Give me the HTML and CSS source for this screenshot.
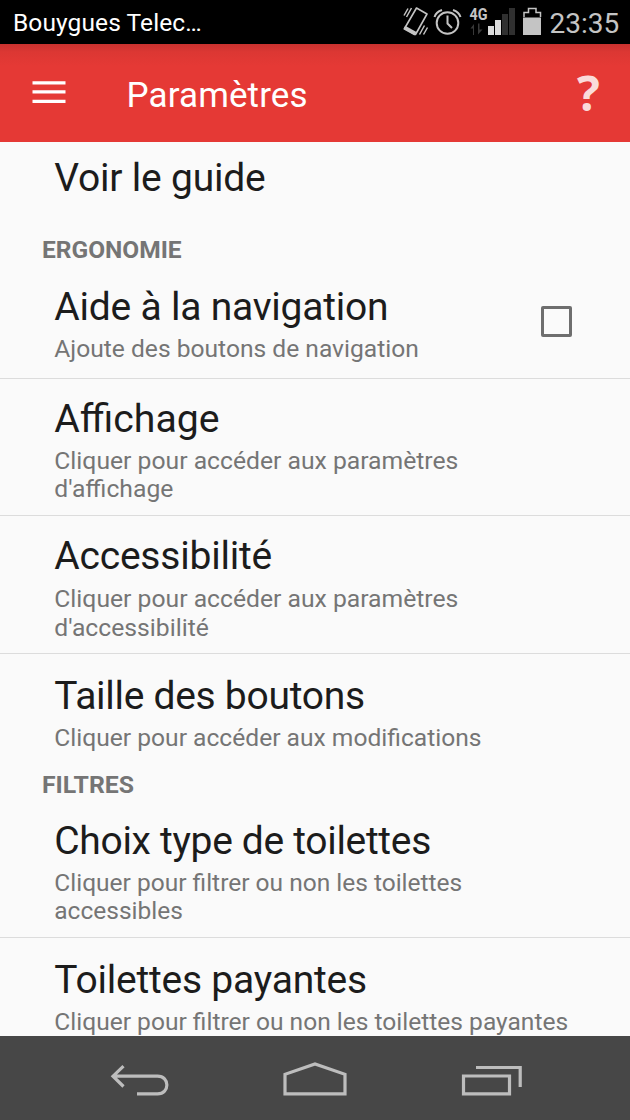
FILE: index.html
```html
<!DOCTYPE html>
<html lang="fr">
<head>
<meta charset="utf-8">
<title>Paramètres</title>
<link rel="stylesheet" href="styles.css">
</head>
<body>
<div class="screen">
  <div class="status">
    <span class="carrier">Bouygues Telec…</span>
    <svg class="status-icons" width="152" height="44" viewBox="0 0 152 44">
      <g fill="none" stroke="#c4c4c4" stroke-width="1.6">
        <path d="M16.500 8 L27 14 L15.500 34.500 L4.500 28.500 Z" stroke-linejoin="round"/>
        <path d="M4.300 27.500 L15.500 33.700" stroke-width="4"/>
        <path d="M4 15.500 L8 8.500 M6.500 17 L11.500 8 M19.500 34.500 L24.500 25.500 M23.500 34.500 L27.500 27.500" stroke-width="1.500"/>
        <circle cx="47.500" cy="23" r="10.800" stroke-width="2"/>
        <path d="M47.500 15.500 V23.500 L52 28" stroke-width="2"/>
        <path d="M34.500 17 Q36 12 42 10 M53 10 Q59 12 60.500 17" stroke-width="2"/>
      </g>
      <text class="net" x="69.500" y="20" textLength="18" lengthAdjust="spacingAndGlyphs">4G</text>
      <path d="M74 35 V24 L70.500 28.500 H73 V35 Z M78 23.500 V34.500 L82.500 29.500 H79.500 V23.500 Z" fill="#393939"/>
      <path d="M88 26 h6 v9 h-6 z M95 20 h6 v15 h-6 z" fill="#dcdcdc"/>
      <path d="M102 14 h6 v21 h-6 z M109 8 h6 v27 h-6 z" fill="#303030"/>
      <path d="M124 17 V12.500 H128.500 V8.500 H136 V12.500 H140.500 V17" fill="none" stroke="#c4c4c4" stroke-width="1.500"/>
      <path d="M123 17.500 h18 v17.500 h-18 z" fill="#c4c4c4"/>
    </svg>
    <span class="clock">23:35</span>
  </div>
  <div class="appbar">
    <svg class="menu" width="34" height="24" viewBox="0 0 34 24"><path d="M.5 1.200h33v3.200H.5zM.5 10.300h33v3.200H.5zM.5 19.800h33v3.200H.5z" fill="#fff"/></svg>
    <h1 class="heading">Paramètres</h1>
    <span class="help">?</span>
  </div>
  <div class="list">
    <div class="row row-guide"><div class="title">Voir le guide</div></div>
    <div class="section">ERGONOMIE</div>
    <div class="row row-nav line">
      <div><div class="title">Aide à la navigation</div><div class="summary">Ajoute des boutons de navigation</div></div>
      <span class="box"></span>
    </div>
    <div class="row row-display line"><div><div class="title">Affichage</div><div class="summary">Cliquer pour accéder aux paramètres<br>d'affichage</div></div></div>
    <div class="row row-access line"><div><div class="title">Accessibilité</div><div class="summary">Cliquer pour accéder aux paramètres<br>d'accessibilité</div></div></div>
    <div class="row row-size"><div><div class="title">Taille des boutons</div><div class="summary">Cliquer pour accéder aux modifications</div></div></div>
    <div class="section section-filter">FILTRES</div>
    <div class="row row-type line"><div><div class="title">Choix type de toilettes</div><div class="summary">Cliquer pour filtrer ou non les toilettes<br>accessibles</div></div></div>
    <div class="row row-paid"><div><div class="title">Toilettes payantes</div><div class="summary">Cliquer pour filtrer ou non les toilettes payantes</div></div></div>
  </div>
  <div class="navbar">
    <svg width="630" height="84" viewBox="0 0 630 84" fill="none" stroke="#bdbdbd" stroke-width="3.200">
      <path d="M123.500 30.200 L113 40.200 L123.500 50.500 M113 40.200 H157.500 C170 40.200 170 57.800 157.500 57.800 H137"/>
      <path d="M285 57.800 V38.300 L315 28 L345 38.300 V57.800 Z"/>
      <path d="M463.500 40 H509.500 V57.800 H463.500 Z M476 31.500 H520.200 V51"/>
    </svg>
  </div>
</div>
</body>
</html>
```
FILE: styles.css
```css
* { box-sizing: border-box; }
body { margin: 0; font-family: Roboto, sans-serif; }
.screen { width: 630px; height: 1120px; display: flex; flex-direction: column; overflow: hidden; background: #fafafa; }
.status { height: 44px; flex: none; display: flex; background: #000; padding-left: 13px; }
.carrier { width: 387px; font-size: 24.5px; line-height: 46px; color: #fff; letter-spacing: .1px; white-space: nowrap; }
.status-icons { flex: none; }
.net { font: bold 16.500px Roboto, sans-serif; fill: #c4c4c4; }
.clock { margin-left: -2.5px; font-size: 28px; line-height: 48px; color: #c4c4c4; }
.appbar { height: 98px; flex: none; display: flex; padding-left: 32px; background: linear-gradient(#c8322f 0, #dc3733 8px, #e53935 22px); }
.menu { margin-top: 36px; flex: none; }
.heading { margin: 0 0 0 60.5px; width: 450.5px; font-weight: 400; font-size: 35px; line-height: 103px; letter-spacing: .12px; color: #fff; }
.help { font: 700 48px/98px "Open Sans", sans-serif; color: #fadbda; }
.list { flex: none; height: 894px; overflow: hidden; }
.row { display: flex; justify-content: space-between; padding: 17px 58px 0 54.3px; }
.line { border-bottom: 1px solid #dcdcdc; }
.title { font-size: 39px; line-height: 46px; height: 51px; color: #1c1c1c; white-space: nowrap; letter-spacing: -.22px; }
.summary { font-size: 24.6px; line-height: 28.4px; color: #757575; white-space: nowrap; }
.section { height: 36px; padding: 3px 0 0 42px; font-weight: 700; font-size: 24.5px; line-height: 29px; color: #757575; }
.section-filter { padding-top: 4px; font-size: 24.8px; }
.row-guide { height: 90px; padding-top: 13px; }
.row-nav { height: 111px; padding-top: 16px; }
.row-display { height: 137px; padding-top: 17px; }
.row-display .title { font-size: 39.2px; letter-spacing: normal; }
.row-display .summary, .row-access .summary { font-size: 24.7px; }
.row-access { height: 138px; }
.row-access .summary { line-height: 29px; }
.row-size { height: 112px; padding-top: 19px; }
.row-size .title { letter-spacing: -.28px; }
.row-type { height: 136px; padding-top: 16px; }
.row-type .title { letter-spacing: -.32px; }
.row-type .summary { font-size: 24.5px; }
.row-paid { height: 98px; padding-top: 19px; }
.row-paid .summary { font-size: 24.55px; }
.box { flex: none; width: 31px; height: 31px; margin-top: 22px; border: 3px solid #6e6e6e; border-radius: 2px; }
.navbar { height: 84px; flex: none; background: #474747; }
```
